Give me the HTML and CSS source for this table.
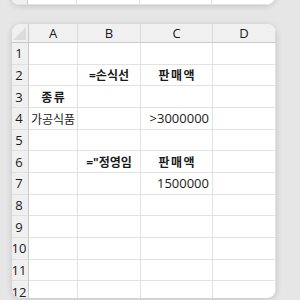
FILE: index.html
```html
<!DOCTYPE html>
<html>
<head>
<meta charset="utf-8">
<link rel="stylesheet" href="styles.css">
</head>
<body>
<div class="page">
  <div class="card top-card">
    <div class="sheet top-sheet">
      <div class="rh">12</div><div class="c"></div><div class="c"></div><div class="c"></div><div class="c"></div>
    </div>
  </div>
  <div class="card main-card">
    <div class="sheet">
      <div class="corner"><span class="tri"></span></div>
      <div class="ch">A</div><div class="ch">B</div><div class="ch">C</div><div class="ch">D</div>

      <div class="rh">1</div><div class="c"></div><div class="c"></div><div class="c"></div><div class="c"></div>
      <div class="rh">2</div><div class="c"></div><div class="c b ctr ko">=손식선</div><div class="c b ctr ko sp">판매액</div><div class="c"></div>
      <div class="rh">3</div><div class="c b ctr ko sp">종류</div><div class="c"></div><div class="c"></div><div class="c"></div>
      <div class="rh">4</div><div class="c lft ko">가공식품</div><div class="c"></div><div class="c rt">&gt;3000000</div><div class="c"></div>
      <div class="rh">5</div><div class="c"></div><div class="c"></div><div class="c"></div><div class="c"></div>
      <div class="rh">6</div><div class="c"></div><div class="c b ctr ko">="정영임</div><div class="c b ctr ko sp">판매액</div><div class="c"></div>
      <div class="rh">7</div><div class="c"></div><div class="c"></div><div class="c rt">1500000</div><div class="c"></div>
      <div class="rh">8</div><div class="c"></div><div class="c"></div><div class="c"></div><div class="c"></div>
      <div class="rh">9</div><div class="c"></div><div class="c"></div><div class="c"></div><div class="c"></div>
      <div class="rh">10</div><div class="c"></div><div class="c"></div><div class="c"></div><div class="c"></div>
      <div class="rh">11</div><div class="c"></div><div class="c"></div><div class="c"></div><div class="c"></div>
      <div class="rh">12</div><div class="c"></div><div class="c"></div><div class="c"></div><div class="c"></div>
    </div>
  </div>
</div>
</body>
</html>
```
FILE: styles.css
```css
html, body {
  margin: 0;
  padding: 0;
  width: 300px;
  height: 300px;
  overflow: hidden;
  background: #e6e6e6;
  font-family: "Open Sans", "Noto Sans CJK KR", sans-serif;
  font-size: 13px;
  color: #1a1a1a;
}
.page {
  display: flex;
  flex-direction: column;
  gap: 19px;
  padding-left: 12px;
}
.card {
  width: 264px;
  background: #fff;
  border-radius: 9px;
  overflow: hidden;
  box-shadow: 0 1px 6px rgba(0,0,0,0.16);
}
.top-card {
  margin-top: -17px;
  margin-left: -1px;
  height: 22px;
}
.main-card {
  height: 274px;
}
.sheet {
  display: grid;
  grid-template-columns: 17px 49px 63px 72px 63px;
  grid-template-rows: 19px repeat(12, 21.67px);
}
.top-sheet {
  grid-template-rows: 22px;
}
.corner {
  background: #f0f0f0;
  border-right: 1px solid #c9c9c9;
  border-bottom: 1px solid #c9c9c9;
  position: relative;
}
.tri {
  position: absolute;
  right: 2px;
  bottom: 2px;
  width: 0;
  height: 0;
  border-left: 13px solid transparent;
  border-bottom: 13px solid #dcdcdc;
}
.ch {
  background: #f0f0f0;
  border-right: 1px solid #dadada;
  border-bottom: 1px solid #c9c9c9;
  display: flex;
  align-items: center;
  justify-content: center;
  font-size: 13px;
  color: #1a1a1a;
}
.rh {
  background: #f0f0f0;
  border-right: 1px solid #c9c9c9;
  border-bottom: 1px solid #e0e0e0;
  display: flex;
  align-items: center;
  justify-content: center;
  padding-right: 2px;
  font-size: 13px;
  color: #1a1a1a;
  box-sizing: border-box;
}
.c {
  border-right: 1px solid #e2e2e2;
  border-bottom: 1px solid #e2e2e2;
  display: flex;
  align-items: center;
  white-space: nowrap;
  overflow: visible;
  min-width: 0;
  box-sizing: border-box;
}
.ko { font-size: 12px; padding-top: 1px; }
.sp { letter-spacing: 1.5px; text-indent: 1.5px; }
.b { font-weight: bold; }
.ctr { justify-content: center; }
.lft { justify-content: flex-start; padding-left: 2px; }
.rt { justify-content: flex-end; padding-right: 3px; }
```
